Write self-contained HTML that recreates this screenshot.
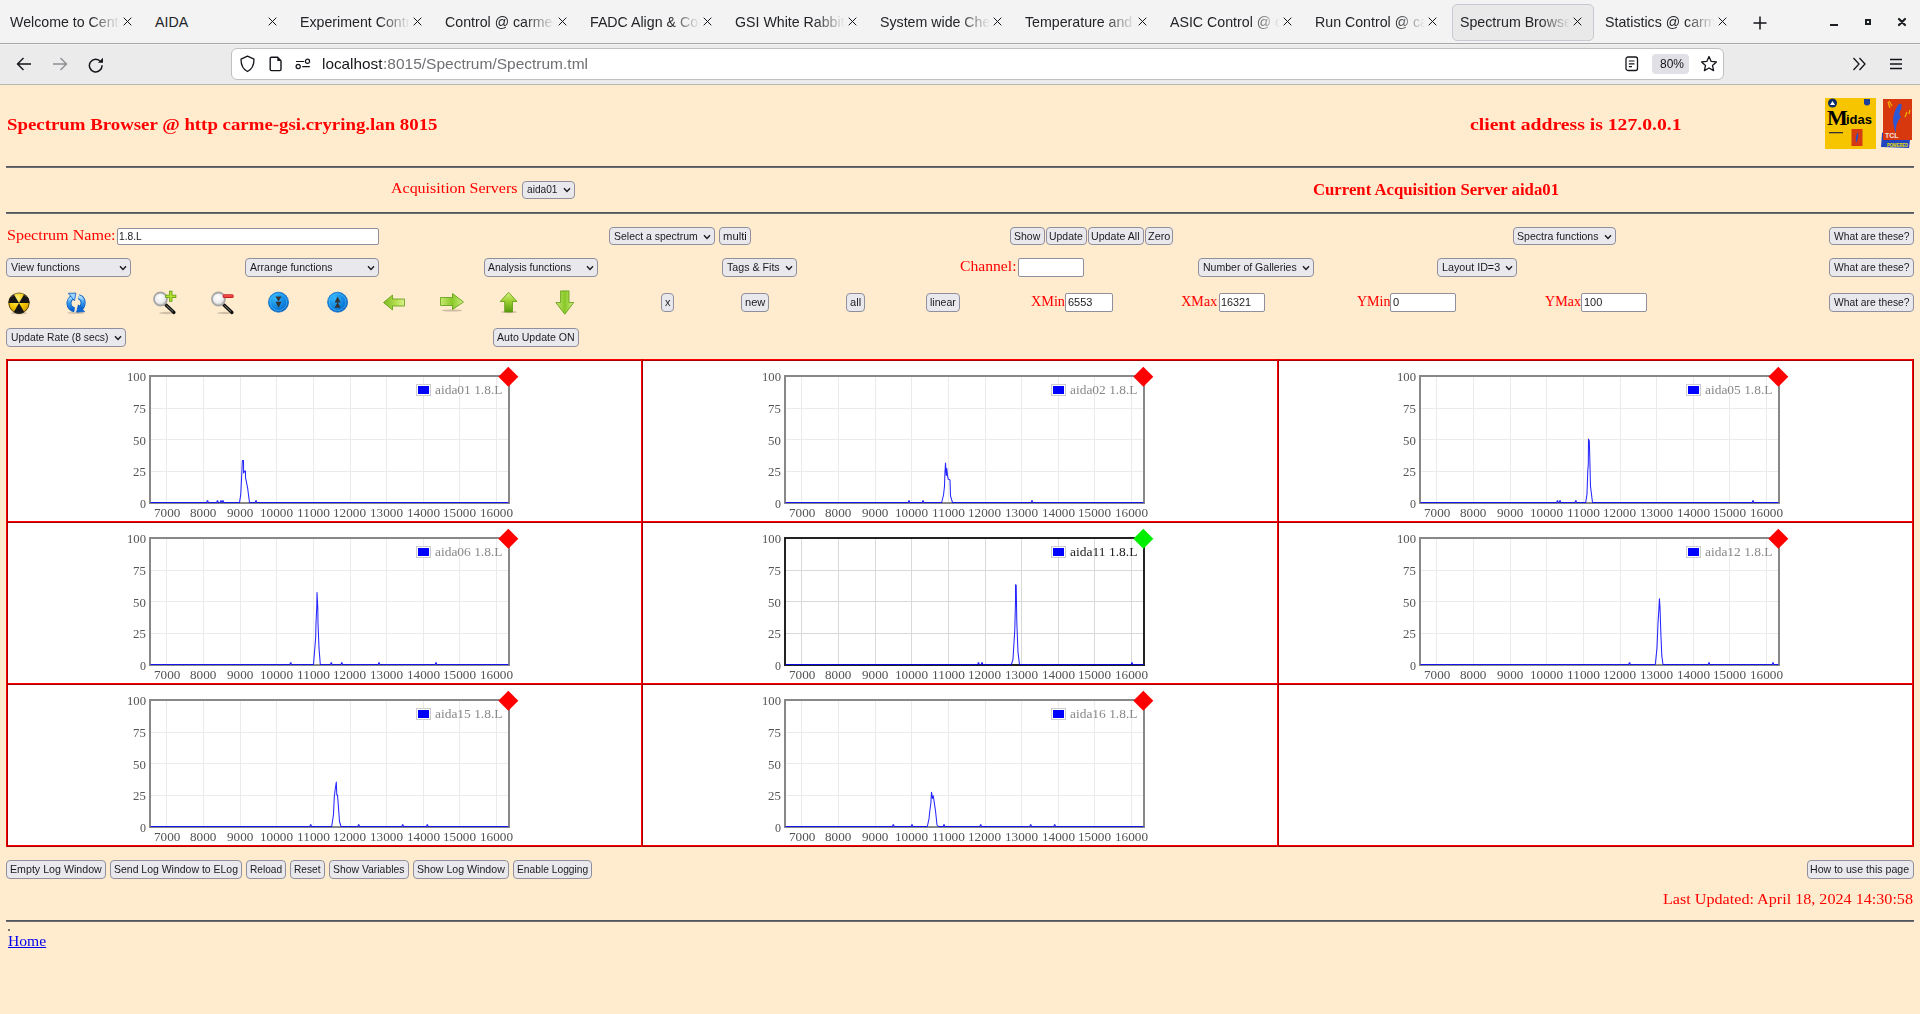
<!DOCTYPE html>
<html><head><meta charset="utf-8"><title>Spectrum Browser</title>
<style>
html,body{margin:0;padding:0;width:1920px;height:1014px;overflow:hidden;background:#ffebcd;position:relative}
.tab{position:absolute;top:12px;height:20px;width:110px;overflow:hidden;white-space:nowrap;font-family:"Liberation Sans",sans-serif;font-size:14.2px;line-height:20px;color:#222428}
.btn{position:absolute;background:#e9e9ed;border:1px solid #8f8f9d;border-radius:4px}
.inp{position:absolute;background:#fff;border:1px solid #8f8f9d;border-radius:2px}
</style></head><body>
<div style="position:absolute;left:0;top:0;width:1920px;height:43px;background:#f3f3f3"></div><div style="position:absolute;left:0;top:43px;width:1920px;height:1px;background:#a9a9a9"></div><div style="position:absolute;left:0;top:44px;width:1920px;height:40px;background:#ebebeb"></div><div style="position:absolute;left:0;top:44px;width:1920px;height:1px;background:#f2f2f2"></div><div style="position:absolute;left:0;top:84px;width:1920px;height:1px;background:#b4b6b2"></div><div style="position:absolute;left:1452px;top:4px;width:140px;height:35px;background:#e9e9e9;border:1px solid #c9c8d0;border-radius:5px"></div><div class="tab" style="left:10px;mask-image:linear-gradient(to right,#000 80px,transparent 110px);-webkit-mask-image:linear-gradient(to right,#000 80px,transparent 110px);">Welcome to Central</div><svg style="position:absolute;left:123px;top:17px" width="9" height="9"><path d="M0.7 0.7L8.3 8.3M8.3 0.7L0.7 8.3" stroke="#15141a" stroke-width="1.0"/></svg><div class="tab" style="left:155px;">AIDA</div><svg style="position:absolute;left:268px;top:17px" width="9" height="9"><path d="M0.7 0.7L8.3 8.3M8.3 0.7L0.7 8.3" stroke="#15141a" stroke-width="1.0"/></svg><div class="tab" style="left:300px;mask-image:linear-gradient(to right,#000 80px,transparent 110px);-webkit-mask-image:linear-gradient(to right,#000 80px,transparent 110px);">Experiment Control</div><svg style="position:absolute;left:413px;top:17px" width="9" height="9"><path d="M0.7 0.7L8.3 8.3M8.3 0.7L0.7 8.3" stroke="#15141a" stroke-width="1.0"/></svg><div class="tab" style="left:445px;mask-image:linear-gradient(to right,#000 80px,transparent 110px);-webkit-mask-image:linear-gradient(to right,#000 80px,transparent 110px);">Control @ carme-gsi</div><svg style="position:absolute;left:558px;top:17px" width="9" height="9"><path d="M0.7 0.7L8.3 8.3M8.3 0.7L0.7 8.3" stroke="#15141a" stroke-width="1.0"/></svg><div class="tab" style="left:590px;mask-image:linear-gradient(to right,#000 80px,transparent 110px);-webkit-mask-image:linear-gradient(to right,#000 80px,transparent 110px);">FADC Align &amp; Control</div><svg style="position:absolute;left:703px;top:17px" width="9" height="9"><path d="M0.7 0.7L8.3 8.3M8.3 0.7L0.7 8.3" stroke="#15141a" stroke-width="1.0"/></svg><div class="tab" style="left:735px;mask-image:linear-gradient(to right,#000 80px,transparent 110px);-webkit-mask-image:linear-gradient(to right,#000 80px,transparent 110px);">GSI White Rabbit</div><svg style="position:absolute;left:848px;top:17px" width="9" height="9"><path d="M0.7 0.7L8.3 8.3M8.3 0.7L0.7 8.3" stroke="#15141a" stroke-width="1.0"/></svg><div class="tab" style="left:880px;mask-image:linear-gradient(to right,#000 80px,transparent 110px);-webkit-mask-image:linear-gradient(to right,#000 80px,transparent 110px);">System wide Checks</div><svg style="position:absolute;left:993px;top:17px" width="9" height="9"><path d="M0.7 0.7L8.3 8.3M8.3 0.7L0.7 8.3" stroke="#15141a" stroke-width="1.0"/></svg><div class="tab" style="left:1025px;mask-image:linear-gradient(to right,#000 80px,transparent 110px);-webkit-mask-image:linear-gradient(to right,#000 80px,transparent 110px);">Temperature and</div><svg style="position:absolute;left:1138px;top:17px" width="9" height="9"><path d="M0.7 0.7L8.3 8.3M8.3 0.7L0.7 8.3" stroke="#15141a" stroke-width="1.0"/></svg><div class="tab" style="left:1170px;mask-image:linear-gradient(to right,#000 80px,transparent 110px);-webkit-mask-image:linear-gradient(to right,#000 80px,transparent 110px);">ASIC Control @ carme</div><svg style="position:absolute;left:1283px;top:17px" width="9" height="9"><path d="M0.7 0.7L8.3 8.3M8.3 0.7L0.7 8.3" stroke="#15141a" stroke-width="1.0"/></svg><div class="tab" style="left:1315px;mask-image:linear-gradient(to right,#000 80px,transparent 110px);-webkit-mask-image:linear-gradient(to right,#000 80px,transparent 110px);">Run Control @ carme</div><svg style="position:absolute;left:1428px;top:17px" width="9" height="9"><path d="M0.7 0.7L8.3 8.3M8.3 0.7L0.7 8.3" stroke="#15141a" stroke-width="1.0"/></svg><div class="tab" style="left:1460px;mask-image:linear-gradient(to right,#000 80px,transparent 110px);-webkit-mask-image:linear-gradient(to right,#000 80px,transparent 110px);">Spectrum Browser</div><svg style="position:absolute;left:1573px;top:17px" width="9" height="9"><path d="M0.7 0.7L8.3 8.3M8.3 0.7L0.7 8.3" stroke="#15141a" stroke-width="1.0"/></svg><div class="tab" style="left:1605px;mask-image:linear-gradient(to right,#000 80px,transparent 110px);-webkit-mask-image:linear-gradient(to right,#000 80px,transparent 110px);">Statistics @ carme</div><svg style="position:absolute;left:1718px;top:17px" width="9" height="9"><path d="M0.7 0.7L8.3 8.3M8.3 0.7L0.7 8.3" stroke="#15141a" stroke-width="1.0"/></svg><svg style="position:absolute;left:1753px;top:16px" width="14" height="14"><path d="M7 0.5V13.5M0.5 7H13.5" stroke="#15141a" stroke-width="1.5"/></svg><div style="position:absolute;left:1830px;top:24px;width:8px;height:2px;background:#1c1f24"></div><div style="position:absolute;left:1865px;top:19px;width:2px;height:2px;border:2px solid #1c1f24"></div><svg style="position:absolute;left:1897px;top:17px" width="10" height="10"><path d="M2 2L8 8M8 2L2 8" stroke="#1c1f24" stroke-width="2.2" stroke-linecap="round"/></svg><svg style="position:absolute;left:16px;top:57px" width="16" height="14"><path d="M1.5 7H15M7.5 1L1.5 7L7.5 13" fill="none" stroke="#15141a" stroke-width="1.4"/></svg><svg style="position:absolute;left:52px;top:57px" width="16" height="14"><path d="M1 7H14.5M8.5 1L14.5 7L8.5 13" fill="none" stroke="#8f8f94" stroke-width="1.4"/></svg><svg style="position:absolute;left:88px;top:57px" width="16" height="16"><path d="M12.6 4.6A6.3 6.3 0 1 0 14 8.2" fill="none" stroke="#15141a" stroke-width="1.5"/><path d="M10 5.8L15 5.8L15 0.8Z" fill="#15141a"/></svg><div style="position:absolute;left:231px;top:48px;width:1491px;height:30px;background:#fff;border:1px solid #c0c0c0;border-radius:6px"></div><svg style="position:absolute;left:239px;top:55px" width="17" height="18"><path d="M8.5 1.2L15 4.2C15 10 12.5 14.5 8.5 16.5C4.5 14.5 2 10 2 4.2Z" fill="none" stroke="#15141a" stroke-width="1.3" stroke-linejoin="round"/></svg><svg style="position:absolute;left:268px;top:56px" width="15" height="16"><path d="M2.2 2.5Q2.2 1.2 3.5 1.2H9.5L13 4.7V13.3Q13 14.6 11.7 14.6H3.5Q2.2 14.6 2.2 13.3Z" fill="none" stroke="#15141a" stroke-width="1.4"/><path d="M9.3 1.2V4.9H13Z" fill="#15141a"/></svg><svg style="position:absolute;left:295px;top:58px" width="16" height="13"><path d="M1 3.5H9.2M7.2 8.7H14.8" stroke="#15141a" stroke-width="1.2"/><circle cx="12.5" cy="3.3" r="2.1" fill="none" stroke="#15141a" stroke-width="1.2"/><circle cx="3.2" cy="8.5" r="2.1" fill="none" stroke="#15141a" stroke-width="1.2"/></svg><span style="position:absolute;left:322.00px;top:56.64px;font-family:'Liberation Sans';font-size:14.6px;line-height:14.6px;font-weight:400;color:#15141a;white-space:pre;transform:scaleX(1.0502);transform-origin:0 0;">localhost</span><span style="position:absolute;left:382.80px;top:56.64px;font-family:'Liberation Sans';font-size:14.6px;line-height:14.6px;font-weight:400;color:#6f6f74;white-space:pre;transform:scaleX(1.0619);transform-origin:0 0;">:8015/Spectrum/Spectrum.tml</span><svg style="position:absolute;left:1625px;top:56px" width="14" height="16"><rect x="1" y="1" width="11.5" height="13.5" rx="2" fill="none" stroke="#15141a" stroke-width="1.3"/><path d="M3.8 5H9.5M3.8 7.8H9.5M3.8 10.6H7" stroke="#15141a" stroke-width="1.2"/></svg><div style="position:absolute;left:1652px;top:54px;width:37px;height:20px;background:#e0e0e6;border-radius:4px"></div><span style="position:absolute;left:1659.50px;top:58.42px;font-family:'Liberation Sans';font-size:12.5px;line-height:12.5px;font-weight:400;color:#15141a;white-space:pre;transform:scaleX(0.9588);transform-origin:0 0;">80%</span><svg style="position:absolute;left:1700px;top:55px" width="18" height="18"><path d="M9 1.5L11.2 6.4L16.4 6.9L12.5 10.4L13.6 15.6L9 13L4.4 15.6L5.5 10.4L1.6 6.9L6.8 6.4Z" fill="none" stroke="#15141a" stroke-width="1.3" stroke-linejoin="round"/></svg><svg style="position:absolute;left:1852px;top:57px" width="15" height="14"><path d="M1.5 1L7 7L1.5 13M7.5 1L13 7L7.5 13" fill="none" stroke="#15141a" stroke-width="1.3"/></svg><svg style="position:absolute;left:1889px;top:57px" width="14" height="14"><path d="M1 2.5H13M1 7H13M1 11.5H13" stroke="#15141a" stroke-width="1.3"/></svg><div style="position:absolute;left:0;top:85px;width:1920px;height:929px;background:#ffebcd"></div><span style="position:absolute;left:7.00px;top:117.18px;font-family:'Liberation Serif';font-size:16.5px;line-height:16.5px;font-weight:700;color:#ff0000;white-space:pre;transform:scaleX(1.1412);transform-origin:0 0;">Spectrum Browser @ http carme-gsi.cryring.lan 8015</span><span style="position:absolute;left:1470.00px;top:117.18px;font-family:'Liberation Serif';font-size:16.5px;line-height:16.5px;font-weight:700;color:#ff0000;white-space:pre;transform:scaleX(1.1912);transform-origin:0 0;">client address is 127.0.0.1</span><div style="position:absolute;left:6px;top:166px;width:1908px;height:1px;background:#52555a"></div><div style="position:absolute;left:6px;top:167px;width:1908px;height:1px;background:#6b6e72"></div><div style="position:absolute;left:6px;top:212px;width:1908px;height:1px;background:#52555a"></div><div style="position:absolute;left:6px;top:213px;width:1908px;height:1px;background:#6b6e72"></div><div style="position:absolute;left:6px;top:920px;width:1908px;height:1px;background:#52555a"></div><div style="position:absolute;left:6px;top:921px;width:1908px;height:1px;background:#6b6e72"></div><span style="position:absolute;left:391.00px;top:181.19px;font-family:'Liberation Serif';font-size:14.1px;line-height:14.1px;font-weight:400;color:#ff0000;white-space:pre;transform:scaleX(1.1339);transform-origin:0 0;">Acquisition Servers</span><span style="position:absolute;left:1313.30px;top:181.58px;font-family:'Liberation Serif';font-size:16.5px;line-height:16.5px;font-weight:700;color:#ff0000;white-space:pre;transform:scaleX(1.0133);transform-origin:0 0;">Current Acquisition Server aida01</span><svg style="position:absolute;left:1825px;top:98px" width="51" height="51" viewBox="0 0 51 51">
<rect width="51" height="51" fill="#f6c500"/>
<circle cx="7.5" cy="5" r="4.5" fill="#0d2a6a"/><path d="M5 7L7.5 3L10 7Z" fill="#fff"/>
<path d="M39 1H45V6Q42 9 39 6Z" fill="#1c3f9c"/>
<text x="2" y="27" font-family="Liberation Serif" font-weight="700" font-size="22" fill="#000">M</text>
<text x="21" y="26" font-family="Liberation Sans" font-weight="700" font-size="13" fill="#000">idas</text>
<rect x="4" y="34" width="14" height="1.3" fill="#333"/>
<rect x="26.5" y="31" width="11" height="17" fill="#d63a12"/><path d="M31 45Q30 38 33 34Q34 40 31 45Z" fill="#2a50c0"/>
</svg><svg style="position:absolute;left:1880px;top:97px" width="33" height="53" viewBox="0 0 33 53">
<path d="M2 36L1 50L29 51L30 43L32 10Z" fill="#1f45c0"/>
<rect x="3" y="2" width="29" height="41" fill="#d8380e"/>
<path d="M16 36Q9 20 19 7Q23 6 21 12Q18 18 21 20Q15 26 16 36Z" fill="#2b58d8"/>
<path d="M8 5L10 11M9 4L12 9M27 15L25 20M30 13L29 17" stroke="#f4b400" stroke-width="1.2"/>
<text x="5" y="41" font-family="Liberation Sans" font-size="7" font-weight="700" fill="#f0e6e6">TCL</text>
<text x="7" y="50" font-family="Liberation Sans" font-size="5" font-weight="700" fill="#f0e000" textLength="21" lengthAdjust="spacingAndGlyphs">POWERED</text>
</svg><div class="btn" style="left:522px;top:181px;width:50.5px;height:15.5px"></div><span style="position:absolute;left:526.60px;top:184.47px;font-family:'Liberation Sans';font-size:11.5px;line-height:11.5px;font-weight:400;color:#1b1b1f;white-space:pre;transform:scaleX(0.8829);transform-origin:0 0;">aida01</span><svg style="position:absolute;left:562.5px;top:187.2px" width="8" height="6"><path d="M1 1.2L4 4.4L7 1.2" fill="none" stroke="#1b1b1f" stroke-width="1.4"/></svg><span style="position:absolute;left:7.00px;top:228.19px;font-family:'Liberation Serif';font-size:14.1px;line-height:14.1px;font-weight:400;color:#ff0000;white-space:pre;transform:scaleX(1.1408);transform-origin:0 0;">Spectrum Name:</span><div class="inp" style="left:117px;top:227.5px;width:259.5px;height:15.5px"></div><span style="position:absolute;left:119.30px;top:231.17px;font-family:'Liberation Sans';font-size:11.5px;line-height:11.5px;font-weight:400;color:#1b1b1f;white-space:pre;transform:scaleX(0.8875);transform-origin:0 0;">1.8.L</span><div class="btn" style="left:609px;top:227.3px;width:104px;height:15.699999999999989px"></div><span style="position:absolute;left:613.60px;top:230.77px;font-family:'Liberation Sans';font-size:11.5px;line-height:11.5px;font-weight:400;color:#1b1b1f;white-space:pre;transform:scaleX(0.9104);transform-origin:0 0;">Select a spectrum</span><svg style="position:absolute;left:703.0px;top:233.6px" width="8" height="6"><path d="M1 1.2L4 4.4L7 1.2" fill="none" stroke="#1b1b1f" stroke-width="1.4"/></svg><div class="btn" style="left:719px;top:227.3px;width:30px;height:15.699999999999989px"></div><span style="position:absolute;left:723.10px;top:230.77px;font-family:'Liberation Sans';font-size:11.5px;line-height:11.5px;font-weight:400;color:#1b1b1f;white-space:pre;transform:scaleX(0.9802);transform-origin:0 0;">multi</span><div class="btn" style="left:1010px;top:227.3px;width:32.5px;height:15.699999999999989px"></div><span style="position:absolute;left:1014.10px;top:230.77px;font-family:'Liberation Sans';font-size:11.5px;line-height:11.5px;font-weight:400;color:#1b1b1f;white-space:pre;transform:scaleX(0.9138);transform-origin:0 0;">Show</span><div class="btn" style="left:1045.5px;top:227.3px;width:39.0px;height:15.699999999999989px"></div><span style="position:absolute;left:1049.15px;top:230.77px;font-family:'Liberation Sans';font-size:11.5px;line-height:11.5px;font-weight:400;color:#1b1b1f;white-space:pre;transform:scaleX(0.9085);transform-origin:0 0;">Update</span><div class="btn" style="left:1087.5px;top:227.3px;width:54.0px;height:15.699999999999989px"></div><span style="position:absolute;left:1091.20px;top:230.77px;font-family:'Liberation Sans';font-size:11.5px;line-height:11.5px;font-weight:400;color:#1b1b1f;white-space:pre;transform:scaleX(0.9268);transform-origin:0 0;">Update All</span><div class="btn" style="left:1144.5px;top:227.3px;width:26.5px;height:15.699999999999989px"></div><span style="position:absolute;left:1147.55px;top:230.77px;font-family:'Liberation Sans';font-size:11.5px;line-height:11.5px;font-weight:400;color:#1b1b1f;white-space:pre;transform:scaleX(0.9469);transform-origin:0 0;">Zero</span><div class="btn" style="left:1512.5px;top:227.3px;width:101.5px;height:15.699999999999989px"></div><span style="position:absolute;left:1517.10px;top:230.77px;font-family:'Liberation Sans';font-size:11.5px;line-height:11.5px;font-weight:400;color:#1b1b1f;white-space:pre;transform:scaleX(0.9172);transform-origin:0 0;">Spectra functions</span><svg style="position:absolute;left:1604.0px;top:233.6px" width="8" height="6"><path d="M1 1.2L4 4.4L7 1.2" fill="none" stroke="#1b1b1f" stroke-width="1.4"/></svg><div class="btn" style="left:1829px;top:227.3px;width:83px;height:15.699999999999989px"></div><span style="position:absolute;left:1833.75px;top:230.77px;font-family:'Liberation Sans';font-size:11.5px;line-height:11.5px;font-weight:400;color:#1b1b1f;white-space:pre;transform:scaleX(0.8946);transform-origin:0 0;">What are these?</span><div class="btn" style="left:6px;top:258.4px;width:123px;height:16.30000000000001px"></div><span style="position:absolute;left:10.60px;top:261.87px;font-family:'Liberation Sans';font-size:11.5px;line-height:11.5px;font-weight:400;color:#1b1b1f;white-space:pre;transform:scaleX(0.9317);transform-origin:0 0;">View functions</span><svg style="position:absolute;left:119.0px;top:264.9px" width="8" height="6"><path d="M1 1.2L4 4.4L7 1.2" fill="none" stroke="#1b1b1f" stroke-width="1.4"/></svg><div class="btn" style="left:245px;top:258.4px;width:131.5px;height:16.30000000000001px"></div><span style="position:absolute;left:249.60px;top:261.87px;font-family:'Liberation Sans';font-size:11.5px;line-height:11.5px;font-weight:400;color:#1b1b1f;white-space:pre;transform:scaleX(0.9163);transform-origin:0 0;">Arrange functions</span><svg style="position:absolute;left:366.5px;top:264.9px" width="8" height="6"><path d="M1 1.2L4 4.4L7 1.2" fill="none" stroke="#1b1b1f" stroke-width="1.4"/></svg><div class="btn" style="left:483.5px;top:258.4px;width:112.5px;height:16.30000000000001px"></div><span style="position:absolute;left:488.10px;top:261.87px;font-family:'Liberation Sans';font-size:11.5px;line-height:11.5px;font-weight:400;color:#1b1b1f;white-space:pre;transform:scaleX(0.9039);transform-origin:0 0;">Analysis functions</span><svg style="position:absolute;left:586.0px;top:264.9px" width="8" height="6"><path d="M1 1.2L4 4.4L7 1.2" fill="none" stroke="#1b1b1f" stroke-width="1.4"/></svg><div class="btn" style="left:722px;top:258.4px;width:73px;height:16.30000000000001px"></div><span style="position:absolute;left:726.60px;top:261.87px;font-family:'Liberation Sans';font-size:11.5px;line-height:11.5px;font-weight:400;color:#1b1b1f;white-space:pre;transform:scaleX(0.9263);transform-origin:0 0;">Tags &amp; Fits</span><svg style="position:absolute;left:785.0px;top:264.9px" width="8" height="6"><path d="M1 1.2L4 4.4L7 1.2" fill="none" stroke="#1b1b1f" stroke-width="1.4"/></svg><span style="position:absolute;left:960.40px;top:258.99px;font-family:'Liberation Serif';font-size:14.1px;line-height:14.1px;font-weight:400;color:#ff0000;white-space:pre;transform:scaleX(1.1102);transform-origin:0 0;">Channel:</span><div class="inp" style="left:1018px;top:258.4px;width:64px;height:16.30000000000001px"></div><div class="btn" style="left:1198px;top:258.4px;width:114px;height:16.30000000000001px"></div><span style="position:absolute;left:1202.60px;top:261.87px;font-family:'Liberation Sans';font-size:11.5px;line-height:11.5px;font-weight:400;color:#1b1b1f;white-space:pre;transform:scaleX(0.9162);transform-origin:0 0;">Number of Galleries</span><svg style="position:absolute;left:1302.0px;top:264.9px" width="8" height="6"><path d="M1 1.2L4 4.4L7 1.2" fill="none" stroke="#1b1b1f" stroke-width="1.4"/></svg><div class="btn" style="left:1437px;top:258.4px;width:78px;height:16.30000000000001px"></div><span style="position:absolute;left:1441.60px;top:261.87px;font-family:'Liberation Sans';font-size:11.5px;line-height:11.5px;font-weight:400;color:#1b1b1f;white-space:pre;transform:scaleX(0.9319);transform-origin:0 0;">Layout ID=3</span><svg style="position:absolute;left:1505.0px;top:264.9px" width="8" height="6"><path d="M1 1.2L4 4.4L7 1.2" fill="none" stroke="#1b1b1f" stroke-width="1.4"/></svg><div class="btn" style="left:1829px;top:258.4px;width:83px;height:16.30000000000001px"></div><span style="position:absolute;left:1833.75px;top:261.87px;font-family:'Liberation Sans';font-size:11.5px;line-height:11.5px;font-weight:400;color:#1b1b1f;white-space:pre;transform:scaleX(0.8946);transform-origin:0 0;">What are these?</span><div class="btn" style="left:661px;top:293px;width:11px;height:17px"></div><span style="position:absolute;left:664.75px;top:297.07px;font-family:'Liberation Sans';font-size:11.5px;line-height:11.5px;font-weight:400;color:#1b1b1f;white-space:pre;transform:scaleX(0.9565);transform-origin:0 0;">x</span><div class="btn" style="left:741px;top:293px;width:26px;height:17px"></div><span style="position:absolute;left:744.85px;top:297.07px;font-family:'Liberation Sans';font-size:11.5px;line-height:11.5px;font-weight:400;color:#1b1b1f;white-space:pre;transform:scaleX(0.9617);transform-origin:0 0;">new</span><div class="btn" style="left:846px;top:293px;width:17px;height:17px"></div><span style="position:absolute;left:849.95px;top:297.07px;font-family:'Liberation Sans';font-size:11.5px;line-height:11.5px;font-weight:400;color:#1b1b1f;white-space:pre;transform:scaleX(0.9639);transform-origin:0 0;">all</span><div class="btn" style="left:926px;top:293px;width:32px;height:17px"></div><span style="position:absolute;left:930.10px;top:297.07px;font-family:'Liberation Sans';font-size:11.5px;line-height:11.5px;font-weight:400;color:#1b1b1f;white-space:pre;transform:scaleX(0.9168);transform-origin:0 0;">linear</span><span style="position:absolute;left:1031.00px;top:294.19px;font-family:'Liberation Serif';font-size:14.1px;line-height:14.1px;font-weight:400;color:#ff0000;white-space:pre;transform:scaleX(1.0093);transform-origin:0 0;">XMin</span><div class="inp" style="left:1065.4px;top:293px;width:45.59999999999991px;height:17px"></div><span style="position:absolute;left:1067.70px;top:297.07px;font-family:'Liberation Sans';font-size:11.5px;line-height:11.5px;font-weight:400;color:#1b1b1f;white-space:pre;transform:scaleX(0.9573);transform-origin:0 0;">6553</span><span style="position:absolute;left:1181.20px;top:294.19px;font-family:'Liberation Serif';font-size:14.1px;line-height:14.1px;font-weight:400;color:#ff0000;white-space:pre;">XMax</span><div class="inp" style="left:1218.5px;top:293px;width:44.700000000000045px;height:17px"></div><span style="position:absolute;left:1220.80px;top:297.07px;font-family:'Liberation Sans';font-size:11.5px;line-height:11.5px;font-weight:400;color:#1b1b1f;white-space:pre;transform:scaleX(0.9411);transform-origin:0 0;">16321</span><span style="position:absolute;left:1356.70px;top:294.19px;font-family:'Liberation Serif';font-size:14.1px;line-height:14.1px;font-weight:400;color:#ff0000;white-space:pre;transform:scaleX(0.9944);transform-origin:0 0;">YMin</span><div class="inp" style="left:1390.3px;top:293px;width:63.700000000000045px;height:17px"></div><span style="position:absolute;left:1392.60px;top:297.07px;font-family:'Liberation Sans';font-size:11.5px;line-height:11.5px;font-weight:400;color:#1b1b1f;white-space:pre;transform:scaleX(0.9678);transform-origin:0 0;">0</span><span style="position:absolute;left:1545.00px;top:294.19px;font-family:'Liberation Serif';font-size:14.1px;line-height:14.1px;font-weight:400;color:#ff0000;white-space:pre;">YMax</span><div class="inp" style="left:1581.2px;top:293px;width:63.799999999999955px;height:17px"></div><span style="position:absolute;left:1583.50px;top:297.07px;font-family:'Liberation Sans';font-size:11.5px;line-height:11.5px;font-weight:400;color:#1b1b1f;white-space:pre;transform:scaleX(0.9537);transform-origin:0 0;">100</span><div class="btn" style="left:1829px;top:293.3px;width:83px;height:16.399999999999977px"></div><span style="position:absolute;left:1833.75px;top:296.77px;font-family:'Liberation Sans';font-size:11.5px;line-height:11.5px;font-weight:400;color:#1b1b1f;white-space:pre;transform:scaleX(0.8946);transform-origin:0 0;">What are these?</span><div class="btn" style="left:6px;top:328.2px;width:118px;height:16.80000000000001px"></div><span style="position:absolute;left:10.60px;top:331.67px;font-family:'Liberation Sans';font-size:11.5px;line-height:11.5px;font-weight:400;color:#1b1b1f;white-space:pre;transform:scaleX(0.8963);transform-origin:0 0;">Update Rate (8 secs)</span><svg style="position:absolute;left:114.0px;top:335.0px" width="8" height="6"><path d="M1 1.2L4 4.4L7 1.2" fill="none" stroke="#1b1b1f" stroke-width="1.4"/></svg><div class="btn" style="left:493px;top:328.2px;width:84px;height:16.80000000000001px"></div><span style="position:absolute;left:497.15px;top:331.67px;font-family:'Liberation Sans';font-size:11.5px;line-height:11.5px;font-weight:400;color:#1b1b1f;white-space:pre;transform:scaleX(0.9207);transform-origin:0 0;">Auto Update ON</span><div class="btn" style="left:6px;top:860.3px;width:98px;height:16.5px"></div><span style="position:absolute;left:10.10px;top:863.77px;font-family:'Liberation Sans';font-size:11.5px;line-height:11.5px;font-weight:400;color:#1b1b1f;white-space:pre;transform:scaleX(0.9265);transform-origin:0 0;">Empty Log Window</span><div class="btn" style="left:110.3px;top:860.3px;width:129.7px;height:16.5px"></div><span style="position:absolute;left:114.15px;top:863.77px;font-family:'Liberation Sans';font-size:11.5px;line-height:11.5px;font-weight:400;color:#1b1b1f;white-space:pre;transform:scaleX(0.9105);transform-origin:0 0;">Send Log Window to ELog</span><div class="btn" style="left:246px;top:860.3px;width:38px;height:16.5px"></div><span style="position:absolute;left:249.95px;top:863.77px;font-family:'Liberation Sans';font-size:11.5px;line-height:11.5px;font-weight:400;color:#1b1b1f;white-space:pre;transform:scaleX(0.8806);transform-origin:0 0;">Reload</span><div class="btn" style="left:290px;top:860.3px;width:32.5px;height:16.5px"></div><span style="position:absolute;left:294.00px;top:863.77px;font-family:'Liberation Sans';font-size:11.5px;line-height:11.5px;font-weight:400;color:#1b1b1f;white-space:pre;transform:scaleX(0.8820);transform-origin:0 0;">Reset</span><div class="btn" style="left:329px;top:860.3px;width:78px;height:16.5px"></div><span style="position:absolute;left:333.25px;top:863.77px;font-family:'Liberation Sans';font-size:11.5px;line-height:11.5px;font-weight:400;color:#1b1b1f;white-space:pre;transform:scaleX(0.9043);transform-origin:0 0;">Show Variables</span><div class="btn" style="left:413px;top:860.3px;width:94px;height:16.5px"></div><span style="position:absolute;left:417.10px;top:863.77px;font-family:'Liberation Sans';font-size:11.5px;line-height:11.5px;font-weight:400;color:#1b1b1f;white-space:pre;transform:scaleX(0.9218);transform-origin:0 0;">Show Log Window</span><div class="btn" style="left:513px;top:860.3px;width:76.5px;height:16.5px"></div><span style="position:absolute;left:516.65px;top:863.77px;font-family:'Liberation Sans';font-size:11.5px;line-height:11.5px;font-weight:400;color:#1b1b1f;white-space:pre;transform:scaleX(0.8907);transform-origin:0 0;">Enable Logging</span><div class="btn" style="left:1806.5px;top:860.3px;width:105.0px;height:16.5px"></div><span style="position:absolute;left:1810.45px;top:863.77px;font-family:'Liberation Sans';font-size:11.5px;line-height:11.5px;font-weight:400;color:#1b1b1f;white-space:pre;transform:scaleX(0.9227);transform-origin:0 0;">How to use this page</span><span style="position:absolute;left:1663.20px;top:892.19px;font-family:'Liberation Serif';font-size:14.1px;line-height:14.1px;font-weight:400;color:#ff0000;white-space:pre;transform:scaleX(1.1445);transform-origin:0 0;">Last Updated: April 18, 2024 14:30:58</span><div style="position:absolute;left:8px;top:929px;width:2px;height:2px;background:#555;opacity:0.8"></div><span style="position:absolute;left:8.20px;top:933.79px;font-family:'Liberation Serif';font-size:14.1px;line-height:14.1px;font-weight:400;color:#0000ee;white-space:pre;transform:scaleX(1.1088);transform-origin:0 0;text-decoration:underline;">Home</span><svg style="position:absolute;left:0;top:280px" width="600" height="40" viewBox="0 280 600 40">
<defs>
<radialGradient id="gy" cx="0.4" cy="0.3" r="0.8"><stop offset="0" stop-color="#fff38a"/><stop offset="0.5" stop-color="#f4c800"/><stop offset="1" stop-color="#c89000"/></radialGradient>
<linearGradient id="gb" x1="0" y1="0" x2="1" y2="1"><stop offset="0" stop-color="#7fd0ff"/><stop offset="0.5" stop-color="#1a8fe0"/><stop offset="1" stop-color="#0a5cc0"/></linearGradient>
<radialGradient id="gbc" cx="0.35" cy="0.3" r="0.8"><stop offset="0" stop-color="#33b8ff"/><stop offset="0.7" stop-color="#0a7ad8"/><stop offset="1" stop-color="#0858b0"/></radialGradient>
<linearGradient id="gg" x1="0" y1="0" x2="0" y2="1"><stop offset="0" stop-color="#d8f080"/><stop offset="0.45" stop-color="#9cd030"/><stop offset="1" stop-color="#5a9a10"/></linearGradient>
<linearGradient id="ggh" x1="0" y1="0" x2="1" y2="0"><stop offset="0" stop-color="#7ab820"/><stop offset="0.6" stop-color="#b8e050"/><stop offset="1" stop-color="#d8f090"/></linearGradient>
<linearGradient id="ggh2" x1="0" y1="0" x2="1" y2="0"><stop offset="0" stop-color="#c8e870"/><stop offset="0.5" stop-color="#88c828"/><stop offset="1" stop-color="#d0f080"/></linearGradient>
<radialGradient id="glens" cx="0.45" cy="0.4" r="0.6"><stop offset="0" stop-color="#ffffff"/><stop offset="0.6" stop-color="#eeeeee"/><stop offset="1" stop-color="#c8c8c8"/></radialGradient>
</defs>
<!-- radiation -->
<ellipse cx="19" cy="313.2" rx="8" ry="1.3" fill="#000" opacity="0.18"/>
<circle cx="19" cy="303.1" r="10.6" fill="url(#gy)"/>
<g fill="#151515">
<path d="M19 303.1 L29.6 303.1 A10.6 10.6 0 0 0 24.3 293.92 Z"/>
<path d="M19 303.1 L13.7 293.92 A10.6 10.6 0 0 0 8.4 303.1 Z"/>
<path d="M19 303.1 L13.7 312.28 A10.6 10.6 0 0 0 24.3 312.28 Z"/>
</g>
<circle cx="19" cy="303.1" r="10.1" fill="none" stroke="#222" stroke-width="1" opacity="0.7"/>
<path d="M11.5 297 A9 9 0 0 1 26.5 297" fill="none" stroke="#fff" stroke-width="0.8" opacity="0.35"/>
<!-- refresh -->
<ellipse cx="76" cy="312.8" rx="9" ry="1.3" fill="#000" opacity="0.15"/>
<linearGradient id="gr2" x1="0" y1="0" x2="0" y2="1"><stop offset="0" stop-color="#b8e4ff"/><stop offset="0.45" stop-color="#3a9ef0"/><stop offset="1" stop-color="#0a62d0"/></linearGradient>
<path d="M73.6 297 A6.6 6.6 0 0 0 74.4 309.8" fill="none" stroke="#0a5cc0" stroke-width="5"/>
<path d="M73.6 297 A6.6 6.6 0 0 0 74.4 309.8" fill="none" stroke="url(#gr2)" stroke-width="3.4"/>
<path d="M68.3 293.3L75.9 293.1L74.5 300.8Z" fill="#9ad4ff" stroke="#0a5cc0" stroke-width="0.8" stroke-linejoin="round"/>
<path d="M78.6 296.6 A6.6 6.6 0 0 1 79 309" fill="none" stroke="#0a5cc0" stroke-width="5"/>
<path d="M78.6 296.6 A6.6 6.6 0 0 1 79 309" fill="none" stroke="url(#gr2)" stroke-width="3.4"/>
<path d="M76.6 312.2L84.6 311.6L78.4 304.8Z" fill="#0c6ad8" stroke="#0a5cc0" stroke-width="0.8" stroke-linejoin="round"/>
<!-- zoom in -->
<ellipse cx="167" cy="313" rx="8" ry="1.2" fill="#000" opacity="0.18"/>
<path d="M166 305L174 312.5" stroke="#111" stroke-width="3.2" stroke-linecap="round"/>
<path d="M166.5 305.5L173 311.5" stroke="#888" stroke-width="1"/>
<circle cx="160.5" cy="299" r="6.5" fill="url(#glens)" stroke="#a8a8a8" stroke-width="1.8"/>
<path d="M170.7 290.8V301.8M165.3 296.4H176.3" stroke="#5a9a10" stroke-width="3.4"/>
<path d="M170.7 291.6V301M166.1 296.4H175.5" stroke="#b8e030" stroke-width="1.8"/>
<!-- zoom out -->
<ellipse cx="225" cy="313" rx="8" ry="1.2" fill="#000" opacity="0.18"/>
<path d="M224 305L232 312.5" stroke="#111" stroke-width="3.2" stroke-linecap="round"/>
<path d="M224.5 305.5L231 311.5" stroke="#888" stroke-width="1"/>
<circle cx="218.5" cy="299" r="6.5" fill="url(#glens)" stroke="#a8a8a8" stroke-width="1.8"/>
<rect x="222.7" y="294.3" width="11" height="3.6" rx="1.5" fill="#c02020"/><rect x="223.4" y="295" width="9.6" height="2" rx="1" fill="#f04848"/>
<!-- blue down -->
<circle cx="278.5" cy="302.2" r="10" fill="url(#gbc)" stroke="#0868c8" stroke-width="0.8"/>
<circle cx="278.5" cy="302.2" r="8.3" fill="none" stroke="#5cc8ff" stroke-width="0.7" opacity="0.8"/>
<path d="M275.5 296.5H281.5L278.5 301.5Z M275.5 301.8H281.5L278.5 307.8Z" fill="#333"/>
<!-- blue up -->
<circle cx="337.6" cy="302.2" r="10" fill="url(#gbc)" stroke="#0868c8" stroke-width="0.8"/>
<circle cx="337.6" cy="302.2" r="8.3" fill="none" stroke="#5cc8ff" stroke-width="0.7" opacity="0.8"/>
<path d="M334.6 302.5H340.6L337.6 296.5Z M334.6 307.8H340.6L337.6 302.2Z" fill="#333"/>
<!-- left arrow -->
<path d="M383.5 302.5L392.5 295V299H404.5V306H392.5V310Z" fill="url(#ggh)" stroke="#5a9a10" stroke-width="0.8" stroke-linejoin="round"/>
<!-- right arrow -->
<ellipse cx="452" cy="310.5" rx="10" ry="1" fill="#000" opacity="0.2"/>
<path d="M463.5 302L452.5 293.5V297.5H440.5V305.5H452.5V309.5Z" fill="url(#ggh2)" stroke="#5a9a10" stroke-width="0.8" stroke-linejoin="round"/>
<!-- up arrow -->
<ellipse cx="509" cy="312" rx="8" ry="1.2" fill="#000" opacity="0.2"/>
<path d="M508.6 292.3L517 301.5H512.5V312H504.7V301.5H500.2Z" fill="url(#gg)" stroke="#5a9a10" stroke-width="0.8" stroke-linejoin="round"/>
<!-- down arrow -->
<path d="M564.8 314.2L573.8 302.5H569V290.9H560.6V302.5H555.8Z" fill="url(#ggh2)" stroke="#5a9a10" stroke-width="0.8" stroke-linejoin="round"/>
</svg>
<div style="position:absolute;left:8px;top:361px;width:1904px;height:484px;background:#fff"></div><div style="position:absolute;left:6px;top:359px;width:1908px;height:1px;background:#ff0000"></div><div style="position:absolute;left:6px;top:360px;width:1908px;height:1px;background:#a80000"></div><div style="position:absolute;left:6px;top:521px;width:1908px;height:1px;background:#ff0000"></div><div style="position:absolute;left:6px;top:522px;width:1908px;height:1px;background:#a80000"></div><div style="position:absolute;left:6px;top:683px;width:1908px;height:1px;background:#ff0000"></div><div style="position:absolute;left:6px;top:684px;width:1908px;height:1px;background:#a80000"></div><div style="position:absolute;left:6px;top:845px;width:1908px;height:1px;background:#ff0000"></div><div style="position:absolute;left:6px;top:846px;width:1908px;height:1px;background:#a80000"></div><div style="position:absolute;left:6px;top:359px;width:1px;height:488px;background:#ff0000"></div><div style="position:absolute;left:7px;top:359px;width:1px;height:488px;background:#a80000"></div><div style="position:absolute;left:641px;top:359px;width:1px;height:488px;background:#ff0000"></div><div style="position:absolute;left:642px;top:359px;width:1px;height:488px;background:#a80000"></div><div style="position:absolute;left:1277px;top:359px;width:1px;height:488px;background:#ff0000"></div><div style="position:absolute;left:1278px;top:359px;width:1px;height:488px;background:#a80000"></div><div style="position:absolute;left:1912px;top:359px;width:1px;height:488px;background:#ff0000"></div><div style="position:absolute;left:1913px;top:359px;width:1px;height:488px;background:#a80000"></div><svg style="position:absolute;left:149px;top:375px;overflow:visible" width="361" height="129"><line x1="17.5" y1="2" x2="17.5" y2="127" stroke="#ebebeb" stroke-width="1"/><line x1="54.5" y1="2" x2="54.5" y2="127" stroke="#ebebeb" stroke-width="1"/><line x1="91.5" y1="2" x2="91.5" y2="127" stroke="#ebebeb" stroke-width="1"/><line x1="127.5" y1="2" x2="127.5" y2="127" stroke="#ebebeb" stroke-width="1"/><line x1="164.5" y1="2" x2="164.5" y2="127" stroke="#ebebeb" stroke-width="1"/><line x1="201.5" y1="2" x2="201.5" y2="127" stroke="#ebebeb" stroke-width="1"/><line x1="237.5" y1="2" x2="237.5" y2="127" stroke="#ebebeb" stroke-width="1"/><line x1="274.5" y1="2" x2="274.5" y2="127" stroke="#ebebeb" stroke-width="1"/><line x1="310.5" y1="2" x2="310.5" y2="127" stroke="#ebebeb" stroke-width="1"/><line x1="347.5" y1="2" x2="347.5" y2="127" stroke="#ebebeb" stroke-width="1"/><line x1="2" y1="33.5" x2="359" y2="33.5" stroke="#ebebeb" stroke-width="1"/><line x1="2" y1="64.5" x2="359" y2="64.5" stroke="#ebebeb" stroke-width="1"/><line x1="2" y1="96.5" x2="359" y2="96.5" stroke="#ebebeb" stroke-width="1"/><rect x="1" y="1" width="359" height="127" fill="none" stroke="#888" stroke-width="2"/><polyline transform="translate(0,0.5)" points="1.50,127.00 57.80,127.00 58.20,125.20 58.80,125.20 59.20,127.00 67.80,127.00 68.20,125.20 68.80,125.20 69.20,127.00 71.30,127.00 71.70,125.20 72.30,125.20 72.70,127.00 73.30,127.00 73.70,125.20 74.30,125.20 74.70,127.00 90.50,127.00 91.80,118.60 93.40,85.00 94.50,85.00 94.60,97.40 95.80,95.60 96.50,95.60 96.50,101.80 98.60,112.40 100.50,127.00 106.30,127.00 106.70,125.20 107.30,125.20 107.70,127.00 359.50,127.00" fill="none" stroke="#0000ff" stroke-opacity="0.85" stroke-width="1.05" stroke-linejoin="round"/><rect x="267.5" y="9.5" width="14" height="11" fill="#fff" stroke="#ccc" stroke-width="1"/><rect x="269" y="11" width="11" height="8" fill="#0000ff"/><path d="M359.3 -8.2L369.3 1.8L359.3 11.8L349.3 1.8Z" fill="#ff0000"/></svg><span style="position:absolute;left:434.50px;top:383.95px;font-family:'Liberation Serif';font-size:12px;line-height:12px;font-weight:400;color:#888;white-space:pre;transform:scaleX(1.1189);transform-origin:0 0;">aida01 1.8.L</span><span style="position:absolute;left:127.20px;top:372.09px;font-family:'Liberation Serif';font-size:11.6px;line-height:11.6px;font-weight:400;color:#545454;white-space:pre;transform:scaleX(1.0925);transform-origin:0 0;">100</span><span style="position:absolute;left:133.40px;top:403.84px;font-family:'Liberation Serif';font-size:11.6px;line-height:11.6px;font-weight:400;color:#545454;white-space:pre;transform:scaleX(1.1040);transform-origin:0 0;">75</span><span style="position:absolute;left:133.40px;top:435.59px;font-family:'Liberation Serif';font-size:11.6px;line-height:11.6px;font-weight:400;color:#545454;white-space:pre;transform:scaleX(1.1040);transform-origin:0 0;">50</span><span style="position:absolute;left:133.40px;top:467.34px;font-family:'Liberation Serif';font-size:11.6px;line-height:11.6px;font-weight:400;color:#545454;white-space:pre;transform:scaleX(1.1040);transform-origin:0 0;">25</span><span style="position:absolute;left:140.20px;top:499.09px;font-family:'Liberation Serif';font-size:11.6px;line-height:11.6px;font-weight:400;color:#545454;white-space:pre;transform:scaleX(1.0350);transform-origin:0 0;">0</span><span style="position:absolute;left:153.72px;top:507.58px;font-family:'Liberation Serif';font-size:11.6px;line-height:11.6px;font-weight:400;color:#545454;white-space:pre;transform:scaleX(1.1342);transform-origin:0 0;">7000</span><span style="position:absolute;left:190.33px;top:507.58px;font-family:'Liberation Serif';font-size:11.6px;line-height:11.6px;font-weight:400;color:#545454;white-space:pre;transform:scaleX(1.1342);transform-origin:0 0;">8000</span><span style="position:absolute;left:226.94px;top:507.58px;font-family:'Liberation Serif';font-size:11.6px;line-height:11.6px;font-weight:400;color:#545454;white-space:pre;transform:scaleX(1.1342);transform-origin:0 0;">9000</span><span style="position:absolute;left:260.20px;top:507.58px;font-family:'Liberation Serif';font-size:11.6px;line-height:11.6px;font-weight:400;color:#545454;white-space:pre;transform:scaleX(1.1385);transform-origin:0 0;">10000</span><span style="position:absolute;left:296.81px;top:507.58px;font-family:'Liberation Serif';font-size:11.6px;line-height:11.6px;font-weight:400;color:#545454;white-space:pre;transform:scaleX(1.1554);transform-origin:0 0;">11000</span><span style="position:absolute;left:333.43px;top:507.58px;font-family:'Liberation Serif';font-size:11.6px;line-height:11.6px;font-weight:400;color:#545454;white-space:pre;transform:scaleX(1.1385);transform-origin:0 0;">12000</span><span style="position:absolute;left:370.04px;top:507.58px;font-family:'Liberation Serif';font-size:11.6px;line-height:11.6px;font-weight:400;color:#545454;white-space:pre;transform:scaleX(1.1385);transform-origin:0 0;">13000</span><span style="position:absolute;left:406.65px;top:507.58px;font-family:'Liberation Serif';font-size:11.6px;line-height:11.6px;font-weight:400;color:#545454;white-space:pre;transform:scaleX(1.1385);transform-origin:0 0;">14000</span><span style="position:absolute;left:443.26px;top:507.58px;font-family:'Liberation Serif';font-size:11.6px;line-height:11.6px;font-weight:400;color:#545454;white-space:pre;transform:scaleX(1.1385);transform-origin:0 0;">15000</span><span style="position:absolute;left:479.87px;top:507.58px;font-family:'Liberation Serif';font-size:11.6px;line-height:11.6px;font-weight:400;color:#545454;white-space:pre;transform:scaleX(1.1385);transform-origin:0 0;">16000</span><svg style="position:absolute;left:784px;top:375px;overflow:visible" width="361" height="129"><line x1="17.5" y1="2" x2="17.5" y2="127" stroke="#ebebeb" stroke-width="1"/><line x1="54.5" y1="2" x2="54.5" y2="127" stroke="#ebebeb" stroke-width="1"/><line x1="91.5" y1="2" x2="91.5" y2="127" stroke="#ebebeb" stroke-width="1"/><line x1="127.5" y1="2" x2="127.5" y2="127" stroke="#ebebeb" stroke-width="1"/><line x1="164.5" y1="2" x2="164.5" y2="127" stroke="#ebebeb" stroke-width="1"/><line x1="201.5" y1="2" x2="201.5" y2="127" stroke="#ebebeb" stroke-width="1"/><line x1="237.5" y1="2" x2="237.5" y2="127" stroke="#ebebeb" stroke-width="1"/><line x1="274.5" y1="2" x2="274.5" y2="127" stroke="#ebebeb" stroke-width="1"/><line x1="310.5" y1="2" x2="310.5" y2="127" stroke="#ebebeb" stroke-width="1"/><line x1="347.5" y1="2" x2="347.5" y2="127" stroke="#ebebeb" stroke-width="1"/><line x1="2" y1="33.5" x2="359" y2="33.5" stroke="#ebebeb" stroke-width="1"/><line x1="2" y1="64.5" x2="359" y2="64.5" stroke="#ebebeb" stroke-width="1"/><line x1="2" y1="96.5" x2="359" y2="96.5" stroke="#ebebeb" stroke-width="1"/><rect x="1" y="1" width="359" height="127" fill="none" stroke="#888" stroke-width="2"/><polyline transform="translate(0,0.5)" points="1.50,127.00 124.30,127.00 124.70,125.20 125.30,125.20 125.70,127.00 138.30,127.00 138.70,125.20 139.30,125.20 139.70,127.00 157.70,127.00 159.50,119.50 160.50,110.70 160.80,100.00 161.50,87.60 162.30,100.00 162.80,93.00 163.50,100.00 164.20,103.60 166.00,104.40 166.50,120.40 168.50,127.00 247.30,127.00 247.70,125.20 248.30,125.20 248.70,127.00 359.50,127.00" fill="none" stroke="#0000ff" stroke-opacity="0.85" stroke-width="1.05" stroke-linejoin="round"/><rect x="267.5" y="9.5" width="14" height="11" fill="#fff" stroke="#ccc" stroke-width="1"/><rect x="269" y="11" width="11" height="8" fill="#0000ff"/><path d="M359.3 -8.2L369.3 1.8L359.3 11.8L349.3 1.8Z" fill="#ff0000"/></svg><span style="position:absolute;left:1069.50px;top:383.95px;font-family:'Liberation Serif';font-size:12px;line-height:12px;font-weight:400;color:#888;white-space:pre;transform:scaleX(1.1189);transform-origin:0 0;">aida02 1.8.L</span><span style="position:absolute;left:762.20px;top:372.09px;font-family:'Liberation Serif';font-size:11.6px;line-height:11.6px;font-weight:400;color:#545454;white-space:pre;transform:scaleX(1.0925);transform-origin:0 0;">100</span><span style="position:absolute;left:768.40px;top:403.84px;font-family:'Liberation Serif';font-size:11.6px;line-height:11.6px;font-weight:400;color:#545454;white-space:pre;transform:scaleX(1.1040);transform-origin:0 0;">75</span><span style="position:absolute;left:768.40px;top:435.59px;font-family:'Liberation Serif';font-size:11.6px;line-height:11.6px;font-weight:400;color:#545454;white-space:pre;transform:scaleX(1.1040);transform-origin:0 0;">50</span><span style="position:absolute;left:768.40px;top:467.34px;font-family:'Liberation Serif';font-size:11.6px;line-height:11.6px;font-weight:400;color:#545454;white-space:pre;transform:scaleX(1.1040);transform-origin:0 0;">25</span><span style="position:absolute;left:775.20px;top:499.09px;font-family:'Liberation Serif';font-size:11.6px;line-height:11.6px;font-weight:400;color:#545454;white-space:pre;transform:scaleX(1.0350);transform-origin:0 0;">0</span><span style="position:absolute;left:788.72px;top:507.58px;font-family:'Liberation Serif';font-size:11.6px;line-height:11.6px;font-weight:400;color:#545454;white-space:pre;transform:scaleX(1.1342);transform-origin:0 0;">7000</span><span style="position:absolute;left:825.33px;top:507.58px;font-family:'Liberation Serif';font-size:11.6px;line-height:11.6px;font-weight:400;color:#545454;white-space:pre;transform:scaleX(1.1342);transform-origin:0 0;">8000</span><span style="position:absolute;left:861.94px;top:507.58px;font-family:'Liberation Serif';font-size:11.6px;line-height:11.6px;font-weight:400;color:#545454;white-space:pre;transform:scaleX(1.1342);transform-origin:0 0;">9000</span><span style="position:absolute;left:895.20px;top:507.58px;font-family:'Liberation Serif';font-size:11.6px;line-height:11.6px;font-weight:400;color:#545454;white-space:pre;transform:scaleX(1.1385);transform-origin:0 0;">10000</span><span style="position:absolute;left:931.81px;top:507.58px;font-family:'Liberation Serif';font-size:11.6px;line-height:11.6px;font-weight:400;color:#545454;white-space:pre;transform:scaleX(1.1554);transform-origin:0 0;">11000</span><span style="position:absolute;left:968.43px;top:507.58px;font-family:'Liberation Serif';font-size:11.6px;line-height:11.6px;font-weight:400;color:#545454;white-space:pre;transform:scaleX(1.1385);transform-origin:0 0;">12000</span><span style="position:absolute;left:1005.04px;top:507.58px;font-family:'Liberation Serif';font-size:11.6px;line-height:11.6px;font-weight:400;color:#545454;white-space:pre;transform:scaleX(1.1385);transform-origin:0 0;">13000</span><span style="position:absolute;left:1041.65px;top:507.58px;font-family:'Liberation Serif';font-size:11.6px;line-height:11.6px;font-weight:400;color:#545454;white-space:pre;transform:scaleX(1.1385);transform-origin:0 0;">14000</span><span style="position:absolute;left:1078.26px;top:507.58px;font-family:'Liberation Serif';font-size:11.6px;line-height:11.6px;font-weight:400;color:#545454;white-space:pre;transform:scaleX(1.1385);transform-origin:0 0;">15000</span><span style="position:absolute;left:1114.87px;top:507.58px;font-family:'Liberation Serif';font-size:11.6px;line-height:11.6px;font-weight:400;color:#545454;white-space:pre;transform:scaleX(1.1385);transform-origin:0 0;">16000</span><svg style="position:absolute;left:1419px;top:375px;overflow:visible" width="361" height="129"><line x1="17.5" y1="2" x2="17.5" y2="127" stroke="#ebebeb" stroke-width="1"/><line x1="54.5" y1="2" x2="54.5" y2="127" stroke="#ebebeb" stroke-width="1"/><line x1="91.5" y1="2" x2="91.5" y2="127" stroke="#ebebeb" stroke-width="1"/><line x1="127.5" y1="2" x2="127.5" y2="127" stroke="#ebebeb" stroke-width="1"/><line x1="164.5" y1="2" x2="164.5" y2="127" stroke="#ebebeb" stroke-width="1"/><line x1="201.5" y1="2" x2="201.5" y2="127" stroke="#ebebeb" stroke-width="1"/><line x1="237.5" y1="2" x2="237.5" y2="127" stroke="#ebebeb" stroke-width="1"/><line x1="274.5" y1="2" x2="274.5" y2="127" stroke="#ebebeb" stroke-width="1"/><line x1="310.5" y1="2" x2="310.5" y2="127" stroke="#ebebeb" stroke-width="1"/><line x1="347.5" y1="2" x2="347.5" y2="127" stroke="#ebebeb" stroke-width="1"/><line x1="2" y1="33.5" x2="359" y2="33.5" stroke="#ebebeb" stroke-width="1"/><line x1="2" y1="64.5" x2="359" y2="64.5" stroke="#ebebeb" stroke-width="1"/><line x1="2" y1="96.5" x2="359" y2="96.5" stroke="#ebebeb" stroke-width="1"/><rect x="1" y="1" width="359" height="127" fill="none" stroke="#888" stroke-width="2"/><polyline transform="translate(0,0.5)" points="1.50,127.00 137.80,127.00 138.20,125.20 138.80,125.20 139.20,127.00 140.30,127.00 140.70,125.20 141.30,125.20 141.70,127.00 156.10,127.00 156.50,125.20 157.10,125.20 157.50,127.00 166.70,127.00 168.00,118.60 168.80,94.70 169.30,89.40 169.50,63.60 170.30,65.40 170.80,83.00 171.50,110.70 173.50,127.00 333.30,127.00 333.70,125.20 334.30,125.20 334.70,127.00 359.50,127.00" fill="none" stroke="#0000ff" stroke-opacity="0.85" stroke-width="1.05" stroke-linejoin="round"/><rect x="267.5" y="9.5" width="14" height="11" fill="#fff" stroke="#ccc" stroke-width="1"/><rect x="269" y="11" width="11" height="8" fill="#0000ff"/><path d="M359.3 -8.2L369.3 1.8L359.3 11.8L349.3 1.8Z" fill="#ff0000"/></svg><span style="position:absolute;left:1704.50px;top:383.95px;font-family:'Liberation Serif';font-size:12px;line-height:12px;font-weight:400;color:#888;white-space:pre;transform:scaleX(1.1189);transform-origin:0 0;">aida05 1.8.L</span><span style="position:absolute;left:1397.20px;top:372.09px;font-family:'Liberation Serif';font-size:11.6px;line-height:11.6px;font-weight:400;color:#545454;white-space:pre;transform:scaleX(1.0925);transform-origin:0 0;">100</span><span style="position:absolute;left:1403.40px;top:403.84px;font-family:'Liberation Serif';font-size:11.6px;line-height:11.6px;font-weight:400;color:#545454;white-space:pre;transform:scaleX(1.1040);transform-origin:0 0;">75</span><span style="position:absolute;left:1403.40px;top:435.59px;font-family:'Liberation Serif';font-size:11.6px;line-height:11.6px;font-weight:400;color:#545454;white-space:pre;transform:scaleX(1.1040);transform-origin:0 0;">50</span><span style="position:absolute;left:1403.40px;top:467.34px;font-family:'Liberation Serif';font-size:11.6px;line-height:11.6px;font-weight:400;color:#545454;white-space:pre;transform:scaleX(1.1040);transform-origin:0 0;">25</span><span style="position:absolute;left:1410.20px;top:499.09px;font-family:'Liberation Serif';font-size:11.6px;line-height:11.6px;font-weight:400;color:#545454;white-space:pre;transform:scaleX(1.0350);transform-origin:0 0;">0</span><span style="position:absolute;left:1423.72px;top:507.58px;font-family:'Liberation Serif';font-size:11.6px;line-height:11.6px;font-weight:400;color:#545454;white-space:pre;transform:scaleX(1.1342);transform-origin:0 0;">7000</span><span style="position:absolute;left:1460.33px;top:507.58px;font-family:'Liberation Serif';font-size:11.6px;line-height:11.6px;font-weight:400;color:#545454;white-space:pre;transform:scaleX(1.1342);transform-origin:0 0;">8000</span><span style="position:absolute;left:1496.94px;top:507.58px;font-family:'Liberation Serif';font-size:11.6px;line-height:11.6px;font-weight:400;color:#545454;white-space:pre;transform:scaleX(1.1342);transform-origin:0 0;">9000</span><span style="position:absolute;left:1530.20px;top:507.58px;font-family:'Liberation Serif';font-size:11.6px;line-height:11.6px;font-weight:400;color:#545454;white-space:pre;transform:scaleX(1.1385);transform-origin:0 0;">10000</span><span style="position:absolute;left:1566.81px;top:507.58px;font-family:'Liberation Serif';font-size:11.6px;line-height:11.6px;font-weight:400;color:#545454;white-space:pre;transform:scaleX(1.1554);transform-origin:0 0;">11000</span><span style="position:absolute;left:1603.43px;top:507.58px;font-family:'Liberation Serif';font-size:11.6px;line-height:11.6px;font-weight:400;color:#545454;white-space:pre;transform:scaleX(1.1385);transform-origin:0 0;">12000</span><span style="position:absolute;left:1640.04px;top:507.58px;font-family:'Liberation Serif';font-size:11.6px;line-height:11.6px;font-weight:400;color:#545454;white-space:pre;transform:scaleX(1.1385);transform-origin:0 0;">13000</span><span style="position:absolute;left:1676.65px;top:507.58px;font-family:'Liberation Serif';font-size:11.6px;line-height:11.6px;font-weight:400;color:#545454;white-space:pre;transform:scaleX(1.1385);transform-origin:0 0;">14000</span><span style="position:absolute;left:1713.26px;top:507.58px;font-family:'Liberation Serif';font-size:11.6px;line-height:11.6px;font-weight:400;color:#545454;white-space:pre;transform:scaleX(1.1385);transform-origin:0 0;">15000</span><span style="position:absolute;left:1749.87px;top:507.58px;font-family:'Liberation Serif';font-size:11.6px;line-height:11.6px;font-weight:400;color:#545454;white-space:pre;transform:scaleX(1.1385);transform-origin:0 0;">16000</span><svg style="position:absolute;left:149px;top:537px;overflow:visible" width="361" height="129"><line x1="17.5" y1="2" x2="17.5" y2="127" stroke="#ebebeb" stroke-width="1"/><line x1="54.5" y1="2" x2="54.5" y2="127" stroke="#ebebeb" stroke-width="1"/><line x1="91.5" y1="2" x2="91.5" y2="127" stroke="#ebebeb" stroke-width="1"/><line x1="127.5" y1="2" x2="127.5" y2="127" stroke="#ebebeb" stroke-width="1"/><line x1="164.5" y1="2" x2="164.5" y2="127" stroke="#ebebeb" stroke-width="1"/><line x1="201.5" y1="2" x2="201.5" y2="127" stroke="#ebebeb" stroke-width="1"/><line x1="237.5" y1="2" x2="237.5" y2="127" stroke="#ebebeb" stroke-width="1"/><line x1="274.5" y1="2" x2="274.5" y2="127" stroke="#ebebeb" stroke-width="1"/><line x1="310.5" y1="2" x2="310.5" y2="127" stroke="#ebebeb" stroke-width="1"/><line x1="347.5" y1="2" x2="347.5" y2="127" stroke="#ebebeb" stroke-width="1"/><line x1="2" y1="33.5" x2="359" y2="33.5" stroke="#ebebeb" stroke-width="1"/><line x1="2" y1="64.5" x2="359" y2="64.5" stroke="#ebebeb" stroke-width="1"/><line x1="2" y1="96.5" x2="359" y2="96.5" stroke="#ebebeb" stroke-width="1"/><rect x="1" y="1" width="359" height="127" fill="none" stroke="#888" stroke-width="2"/><polyline transform="translate(0,0.5)" points="1.50,127.00 141.00,127.00 141.40,125.20 142.00,125.20 142.40,127.00 164.50,127.00 166.70,99.80 167.00,85.60 167.80,68.70 168.00,55.00 168.80,70.50 169.00,85.60 170.00,110.40 171.30,127.00 181.60,127.00 182.00,125.20 182.60,125.20 183.00,127.00 192.10,127.00 192.50,125.20 193.10,125.20 193.50,127.00 229.30,127.00 229.70,125.20 230.30,125.20 230.70,127.00 286.30,127.00 286.70,125.20 287.30,125.20 287.70,127.00 359.50,127.00" fill="none" stroke="#0000ff" stroke-opacity="0.85" stroke-width="1.05" stroke-linejoin="round"/><rect x="267.5" y="9.5" width="14" height="11" fill="#fff" stroke="#ccc" stroke-width="1"/><rect x="269" y="11" width="11" height="8" fill="#0000ff"/><path d="M359.3 -8.2L369.3 1.8L359.3 11.8L349.3 1.8Z" fill="#ff0000"/></svg><span style="position:absolute;left:434.50px;top:545.95px;font-family:'Liberation Serif';font-size:12px;line-height:12px;font-weight:400;color:#888;white-space:pre;transform:scaleX(1.1189);transform-origin:0 0;">aida06 1.8.L</span><span style="position:absolute;left:127.20px;top:534.08px;font-family:'Liberation Serif';font-size:11.6px;line-height:11.6px;font-weight:400;color:#545454;white-space:pre;transform:scaleX(1.0925);transform-origin:0 0;">100</span><span style="position:absolute;left:133.40px;top:565.83px;font-family:'Liberation Serif';font-size:11.6px;line-height:11.6px;font-weight:400;color:#545454;white-space:pre;transform:scaleX(1.1040);transform-origin:0 0;">75</span><span style="position:absolute;left:133.40px;top:597.58px;font-family:'Liberation Serif';font-size:11.6px;line-height:11.6px;font-weight:400;color:#545454;white-space:pre;transform:scaleX(1.1040);transform-origin:0 0;">50</span><span style="position:absolute;left:133.40px;top:629.33px;font-family:'Liberation Serif';font-size:11.6px;line-height:11.6px;font-weight:400;color:#545454;white-space:pre;transform:scaleX(1.1040);transform-origin:0 0;">25</span><span style="position:absolute;left:140.20px;top:661.08px;font-family:'Liberation Serif';font-size:11.6px;line-height:11.6px;font-weight:400;color:#545454;white-space:pre;transform:scaleX(1.0350);transform-origin:0 0;">0</span><span style="position:absolute;left:153.72px;top:669.58px;font-family:'Liberation Serif';font-size:11.6px;line-height:11.6px;font-weight:400;color:#545454;white-space:pre;transform:scaleX(1.1342);transform-origin:0 0;">7000</span><span style="position:absolute;left:190.33px;top:669.58px;font-family:'Liberation Serif';font-size:11.6px;line-height:11.6px;font-weight:400;color:#545454;white-space:pre;transform:scaleX(1.1342);transform-origin:0 0;">8000</span><span style="position:absolute;left:226.94px;top:669.58px;font-family:'Liberation Serif';font-size:11.6px;line-height:11.6px;font-weight:400;color:#545454;white-space:pre;transform:scaleX(1.1342);transform-origin:0 0;">9000</span><span style="position:absolute;left:260.20px;top:669.58px;font-family:'Liberation Serif';font-size:11.6px;line-height:11.6px;font-weight:400;color:#545454;white-space:pre;transform:scaleX(1.1385);transform-origin:0 0;">10000</span><span style="position:absolute;left:296.81px;top:669.58px;font-family:'Liberation Serif';font-size:11.6px;line-height:11.6px;font-weight:400;color:#545454;white-space:pre;transform:scaleX(1.1554);transform-origin:0 0;">11000</span><span style="position:absolute;left:333.43px;top:669.58px;font-family:'Liberation Serif';font-size:11.6px;line-height:11.6px;font-weight:400;color:#545454;white-space:pre;transform:scaleX(1.1385);transform-origin:0 0;">12000</span><span style="position:absolute;left:370.04px;top:669.58px;font-family:'Liberation Serif';font-size:11.6px;line-height:11.6px;font-weight:400;color:#545454;white-space:pre;transform:scaleX(1.1385);transform-origin:0 0;">13000</span><span style="position:absolute;left:406.65px;top:669.58px;font-family:'Liberation Serif';font-size:11.6px;line-height:11.6px;font-weight:400;color:#545454;white-space:pre;transform:scaleX(1.1385);transform-origin:0 0;">14000</span><span style="position:absolute;left:443.26px;top:669.58px;font-family:'Liberation Serif';font-size:11.6px;line-height:11.6px;font-weight:400;color:#545454;white-space:pre;transform:scaleX(1.1385);transform-origin:0 0;">15000</span><span style="position:absolute;left:479.87px;top:669.58px;font-family:'Liberation Serif';font-size:11.6px;line-height:11.6px;font-weight:400;color:#545454;white-space:pre;transform:scaleX(1.1385);transform-origin:0 0;">16000</span><svg style="position:absolute;left:784px;top:537px;overflow:visible" width="361" height="129"><line x1="17.5" y1="2" x2="17.5" y2="127" stroke="#d9d9d9" stroke-width="1"/><line x1="54.5" y1="2" x2="54.5" y2="127" stroke="#d9d9d9" stroke-width="1"/><line x1="91.5" y1="2" x2="91.5" y2="127" stroke="#d9d9d9" stroke-width="1"/><line x1="127.5" y1="2" x2="127.5" y2="127" stroke="#d9d9d9" stroke-width="1"/><line x1="164.5" y1="2" x2="164.5" y2="127" stroke="#d9d9d9" stroke-width="1"/><line x1="201.5" y1="2" x2="201.5" y2="127" stroke="#d9d9d9" stroke-width="1"/><line x1="237.5" y1="2" x2="237.5" y2="127" stroke="#d9d9d9" stroke-width="1"/><line x1="274.5" y1="2" x2="274.5" y2="127" stroke="#d9d9d9" stroke-width="1"/><line x1="310.5" y1="2" x2="310.5" y2="127" stroke="#d9d9d9" stroke-width="1"/><line x1="347.5" y1="2" x2="347.5" y2="127" stroke="#d9d9d9" stroke-width="1"/><line x1="2" y1="33.5" x2="359" y2="33.5" stroke="#d9d9d9" stroke-width="1"/><line x1="2" y1="64.5" x2="359" y2="64.5" stroke="#d9d9d9" stroke-width="1"/><line x1="2" y1="96.5" x2="359" y2="96.5" stroke="#d9d9d9" stroke-width="1"/><rect x="1" y="1" width="359" height="127" fill="none" stroke="#222" stroke-width="2"/><polyline transform="translate(0,0.5)" points="1.50,127.00 193.80,127.00 194.20,125.20 194.80,125.20 195.20,127.00 197.30,127.00 197.70,125.20 198.30,125.20 198.70,127.00 227.40,127.00 229.00,121.80 230.80,92.00 231.50,64.60 231.50,47.30 232.20,47.80 232.80,84.30 234.00,114.90 235.50,127.00 347.30,127.00 347.70,125.20 348.30,125.20 348.70,127.00 359.50,127.00" fill="none" stroke="#0000ff" stroke-opacity="0.85" stroke-width="1.05" stroke-linejoin="round"/><rect x="267.5" y="9.5" width="14" height="11" fill="#fff" stroke="#ccc" stroke-width="1"/><rect x="269" y="11" width="11" height="8" fill="#0000ff"/><path d="M359.3 -8.2L369.3 1.8L359.3 11.8L349.3 1.8Z" fill="#00ee00"/></svg><span style="position:absolute;left:1069.50px;top:545.95px;font-family:'Liberation Serif';font-size:12px;line-height:12px;font-weight:400;color:#222;white-space:pre;transform:scaleX(1.1273);transform-origin:0 0;">aida11 1.8.L</span><span style="position:absolute;left:762.20px;top:534.08px;font-family:'Liberation Serif';font-size:11.6px;line-height:11.6px;font-weight:400;color:#545454;white-space:pre;transform:scaleX(1.0925);transform-origin:0 0;">100</span><span style="position:absolute;left:768.40px;top:565.83px;font-family:'Liberation Serif';font-size:11.6px;line-height:11.6px;font-weight:400;color:#545454;white-space:pre;transform:scaleX(1.1040);transform-origin:0 0;">75</span><span style="position:absolute;left:768.40px;top:597.58px;font-family:'Liberation Serif';font-size:11.6px;line-height:11.6px;font-weight:400;color:#545454;white-space:pre;transform:scaleX(1.1040);transform-origin:0 0;">50</span><span style="position:absolute;left:768.40px;top:629.33px;font-family:'Liberation Serif';font-size:11.6px;line-height:11.6px;font-weight:400;color:#545454;white-space:pre;transform:scaleX(1.1040);transform-origin:0 0;">25</span><span style="position:absolute;left:775.20px;top:661.08px;font-family:'Liberation Serif';font-size:11.6px;line-height:11.6px;font-weight:400;color:#545454;white-space:pre;transform:scaleX(1.0350);transform-origin:0 0;">0</span><span style="position:absolute;left:788.72px;top:669.58px;font-family:'Liberation Serif';font-size:11.6px;line-height:11.6px;font-weight:400;color:#545454;white-space:pre;transform:scaleX(1.1342);transform-origin:0 0;">7000</span><span style="position:absolute;left:825.33px;top:669.58px;font-family:'Liberation Serif';font-size:11.6px;line-height:11.6px;font-weight:400;color:#545454;white-space:pre;transform:scaleX(1.1342);transform-origin:0 0;">8000</span><span style="position:absolute;left:861.94px;top:669.58px;font-family:'Liberation Serif';font-size:11.6px;line-height:11.6px;font-weight:400;color:#545454;white-space:pre;transform:scaleX(1.1342);transform-origin:0 0;">9000</span><span style="position:absolute;left:895.20px;top:669.58px;font-family:'Liberation Serif';font-size:11.6px;line-height:11.6px;font-weight:400;color:#545454;white-space:pre;transform:scaleX(1.1385);transform-origin:0 0;">10000</span><span style="position:absolute;left:931.81px;top:669.58px;font-family:'Liberation Serif';font-size:11.6px;line-height:11.6px;font-weight:400;color:#545454;white-space:pre;transform:scaleX(1.1554);transform-origin:0 0;">11000</span><span style="position:absolute;left:968.43px;top:669.58px;font-family:'Liberation Serif';font-size:11.6px;line-height:11.6px;font-weight:400;color:#545454;white-space:pre;transform:scaleX(1.1385);transform-origin:0 0;">12000</span><span style="position:absolute;left:1005.04px;top:669.58px;font-family:'Liberation Serif';font-size:11.6px;line-height:11.6px;font-weight:400;color:#545454;white-space:pre;transform:scaleX(1.1385);transform-origin:0 0;">13000</span><span style="position:absolute;left:1041.65px;top:669.58px;font-family:'Liberation Serif';font-size:11.6px;line-height:11.6px;font-weight:400;color:#545454;white-space:pre;transform:scaleX(1.1385);transform-origin:0 0;">14000</span><span style="position:absolute;left:1078.26px;top:669.58px;font-family:'Liberation Serif';font-size:11.6px;line-height:11.6px;font-weight:400;color:#545454;white-space:pre;transform:scaleX(1.1385);transform-origin:0 0;">15000</span><span style="position:absolute;left:1114.87px;top:669.58px;font-family:'Liberation Serif';font-size:11.6px;line-height:11.6px;font-weight:400;color:#545454;white-space:pre;transform:scaleX(1.1385);transform-origin:0 0;">16000</span><svg style="position:absolute;left:1419px;top:537px;overflow:visible" width="361" height="129"><line x1="17.5" y1="2" x2="17.5" y2="127" stroke="#ebebeb" stroke-width="1"/><line x1="54.5" y1="2" x2="54.5" y2="127" stroke="#ebebeb" stroke-width="1"/><line x1="91.5" y1="2" x2="91.5" y2="127" stroke="#ebebeb" stroke-width="1"/><line x1="127.5" y1="2" x2="127.5" y2="127" stroke="#ebebeb" stroke-width="1"/><line x1="164.5" y1="2" x2="164.5" y2="127" stroke="#ebebeb" stroke-width="1"/><line x1="201.5" y1="2" x2="201.5" y2="127" stroke="#ebebeb" stroke-width="1"/><line x1="237.5" y1="2" x2="237.5" y2="127" stroke="#ebebeb" stroke-width="1"/><line x1="274.5" y1="2" x2="274.5" y2="127" stroke="#ebebeb" stroke-width="1"/><line x1="310.5" y1="2" x2="310.5" y2="127" stroke="#ebebeb" stroke-width="1"/><line x1="347.5" y1="2" x2="347.5" y2="127" stroke="#ebebeb" stroke-width="1"/><line x1="2" y1="33.5" x2="359" y2="33.5" stroke="#ebebeb" stroke-width="1"/><line x1="2" y1="64.5" x2="359" y2="64.5" stroke="#ebebeb" stroke-width="1"/><line x1="2" y1="96.5" x2="359" y2="96.5" stroke="#ebebeb" stroke-width="1"/><rect x="1" y="1" width="359" height="127" fill="none" stroke="#888" stroke-width="2"/><polyline transform="translate(0,0.5)" points="1.50,127.00 209.80,127.00 210.20,125.20 210.80,125.20 211.20,127.00 236.30,127.00 238.00,110.40 239.00,85.60 240.00,69.60 240.40,61.20 241.00,69.60 241.80,94.50 242.80,118.40 244.00,127.00 289.30,127.00 289.70,125.20 290.30,125.20 290.70,127.00 353.30,127.00 353.70,125.20 354.30,125.20 354.70,127.00 359.50,127.00" fill="none" stroke="#0000ff" stroke-opacity="0.85" stroke-width="1.05" stroke-linejoin="round"/><rect x="267.5" y="9.5" width="14" height="11" fill="#fff" stroke="#ccc" stroke-width="1"/><rect x="269" y="11" width="11" height="8" fill="#0000ff"/><path d="M359.3 -8.2L369.3 1.8L359.3 11.8L349.3 1.8Z" fill="#ff0000"/></svg><span style="position:absolute;left:1704.50px;top:545.95px;font-family:'Liberation Serif';font-size:12px;line-height:12px;font-weight:400;color:#888;white-space:pre;transform:scaleX(1.1189);transform-origin:0 0;">aida12 1.8.L</span><span style="position:absolute;left:1397.20px;top:534.08px;font-family:'Liberation Serif';font-size:11.6px;line-height:11.6px;font-weight:400;color:#545454;white-space:pre;transform:scaleX(1.0925);transform-origin:0 0;">100</span><span style="position:absolute;left:1403.40px;top:565.83px;font-family:'Liberation Serif';font-size:11.6px;line-height:11.6px;font-weight:400;color:#545454;white-space:pre;transform:scaleX(1.1040);transform-origin:0 0;">75</span><span style="position:absolute;left:1403.40px;top:597.58px;font-family:'Liberation Serif';font-size:11.6px;line-height:11.6px;font-weight:400;color:#545454;white-space:pre;transform:scaleX(1.1040);transform-origin:0 0;">50</span><span style="position:absolute;left:1403.40px;top:629.33px;font-family:'Liberation Serif';font-size:11.6px;line-height:11.6px;font-weight:400;color:#545454;white-space:pre;transform:scaleX(1.1040);transform-origin:0 0;">25</span><span style="position:absolute;left:1410.20px;top:661.08px;font-family:'Liberation Serif';font-size:11.6px;line-height:11.6px;font-weight:400;color:#545454;white-space:pre;transform:scaleX(1.0350);transform-origin:0 0;">0</span><span style="position:absolute;left:1423.72px;top:669.58px;font-family:'Liberation Serif';font-size:11.6px;line-height:11.6px;font-weight:400;color:#545454;white-space:pre;transform:scaleX(1.1342);transform-origin:0 0;">7000</span><span style="position:absolute;left:1460.33px;top:669.58px;font-family:'Liberation Serif';font-size:11.6px;line-height:11.6px;font-weight:400;color:#545454;white-space:pre;transform:scaleX(1.1342);transform-origin:0 0;">8000</span><span style="position:absolute;left:1496.94px;top:669.58px;font-family:'Liberation Serif';font-size:11.6px;line-height:11.6px;font-weight:400;color:#545454;white-space:pre;transform:scaleX(1.1342);transform-origin:0 0;">9000</span><span style="position:absolute;left:1530.20px;top:669.58px;font-family:'Liberation Serif';font-size:11.6px;line-height:11.6px;font-weight:400;color:#545454;white-space:pre;transform:scaleX(1.1385);transform-origin:0 0;">10000</span><span style="position:absolute;left:1566.81px;top:669.58px;font-family:'Liberation Serif';font-size:11.6px;line-height:11.6px;font-weight:400;color:#545454;white-space:pre;transform:scaleX(1.1554);transform-origin:0 0;">11000</span><span style="position:absolute;left:1603.43px;top:669.58px;font-family:'Liberation Serif';font-size:11.6px;line-height:11.6px;font-weight:400;color:#545454;white-space:pre;transform:scaleX(1.1385);transform-origin:0 0;">12000</span><span style="position:absolute;left:1640.04px;top:669.58px;font-family:'Liberation Serif';font-size:11.6px;line-height:11.6px;font-weight:400;color:#545454;white-space:pre;transform:scaleX(1.1385);transform-origin:0 0;">13000</span><span style="position:absolute;left:1676.65px;top:669.58px;font-family:'Liberation Serif';font-size:11.6px;line-height:11.6px;font-weight:400;color:#545454;white-space:pre;transform:scaleX(1.1385);transform-origin:0 0;">14000</span><span style="position:absolute;left:1713.26px;top:669.58px;font-family:'Liberation Serif';font-size:11.6px;line-height:11.6px;font-weight:400;color:#545454;white-space:pre;transform:scaleX(1.1385);transform-origin:0 0;">15000</span><span style="position:absolute;left:1749.87px;top:669.58px;font-family:'Liberation Serif';font-size:11.6px;line-height:11.6px;font-weight:400;color:#545454;white-space:pre;transform:scaleX(1.1385);transform-origin:0 0;">16000</span><svg style="position:absolute;left:149px;top:699px;overflow:visible" width="361" height="129"><line x1="17.5" y1="2" x2="17.5" y2="127" stroke="#ebebeb" stroke-width="1"/><line x1="54.5" y1="2" x2="54.5" y2="127" stroke="#ebebeb" stroke-width="1"/><line x1="91.5" y1="2" x2="91.5" y2="127" stroke="#ebebeb" stroke-width="1"/><line x1="127.5" y1="2" x2="127.5" y2="127" stroke="#ebebeb" stroke-width="1"/><line x1="164.5" y1="2" x2="164.5" y2="127" stroke="#ebebeb" stroke-width="1"/><line x1="201.5" y1="2" x2="201.5" y2="127" stroke="#ebebeb" stroke-width="1"/><line x1="237.5" y1="2" x2="237.5" y2="127" stroke="#ebebeb" stroke-width="1"/><line x1="274.5" y1="2" x2="274.5" y2="127" stroke="#ebebeb" stroke-width="1"/><line x1="310.5" y1="2" x2="310.5" y2="127" stroke="#ebebeb" stroke-width="1"/><line x1="347.5" y1="2" x2="347.5" y2="127" stroke="#ebebeb" stroke-width="1"/><line x1="2" y1="33.5" x2="359" y2="33.5" stroke="#ebebeb" stroke-width="1"/><line x1="2" y1="64.5" x2="359" y2="64.5" stroke="#ebebeb" stroke-width="1"/><line x1="2" y1="96.5" x2="359" y2="96.5" stroke="#ebebeb" stroke-width="1"/><rect x="1" y="1" width="359" height="127" fill="none" stroke="#888" stroke-width="2"/><polyline transform="translate(0,0.5)" points="1.50,127.00 161.00,127.00 161.40,125.20 162.00,125.20 162.40,127.00 182.70,127.00 184.50,114.90 185.30,97.10 186.30,89.20 187.30,82.50 187.80,95.40 188.50,95.40 189.20,104.20 190.50,122.00 192.00,127.00 209.00,127.00 209.40,125.20 210.00,125.20 210.40,127.00 253.00,127.00 253.40,125.20 254.00,125.20 254.40,127.00 277.60,127.00 278.00,125.20 278.60,125.20 279.00,127.00 359.50,127.00" fill="none" stroke="#0000ff" stroke-opacity="0.85" stroke-width="1.05" stroke-linejoin="round"/><rect x="267.5" y="9.5" width="14" height="11" fill="#fff" stroke="#ccc" stroke-width="1"/><rect x="269" y="11" width="11" height="8" fill="#0000ff"/><path d="M359.3 -8.2L369.3 1.8L359.3 11.8L349.3 1.8Z" fill="#ff0000"/></svg><span style="position:absolute;left:434.50px;top:707.95px;font-family:'Liberation Serif';font-size:12px;line-height:12px;font-weight:400;color:#888;white-space:pre;transform:scaleX(1.1189);transform-origin:0 0;">aida15 1.8.L</span><span style="position:absolute;left:127.20px;top:696.08px;font-family:'Liberation Serif';font-size:11.6px;line-height:11.6px;font-weight:400;color:#545454;white-space:pre;transform:scaleX(1.0925);transform-origin:0 0;">100</span><span style="position:absolute;left:133.40px;top:727.83px;font-family:'Liberation Serif';font-size:11.6px;line-height:11.6px;font-weight:400;color:#545454;white-space:pre;transform:scaleX(1.1040);transform-origin:0 0;">75</span><span style="position:absolute;left:133.40px;top:759.58px;font-family:'Liberation Serif';font-size:11.6px;line-height:11.6px;font-weight:400;color:#545454;white-space:pre;transform:scaleX(1.1040);transform-origin:0 0;">50</span><span style="position:absolute;left:133.40px;top:791.33px;font-family:'Liberation Serif';font-size:11.6px;line-height:11.6px;font-weight:400;color:#545454;white-space:pre;transform:scaleX(1.1040);transform-origin:0 0;">25</span><span style="position:absolute;left:140.20px;top:823.08px;font-family:'Liberation Serif';font-size:11.6px;line-height:11.6px;font-weight:400;color:#545454;white-space:pre;transform:scaleX(1.0350);transform-origin:0 0;">0</span><span style="position:absolute;left:153.72px;top:831.58px;font-family:'Liberation Serif';font-size:11.6px;line-height:11.6px;font-weight:400;color:#545454;white-space:pre;transform:scaleX(1.1342);transform-origin:0 0;">7000</span><span style="position:absolute;left:190.33px;top:831.58px;font-family:'Liberation Serif';font-size:11.6px;line-height:11.6px;font-weight:400;color:#545454;white-space:pre;transform:scaleX(1.1342);transform-origin:0 0;">8000</span><span style="position:absolute;left:226.94px;top:831.58px;font-family:'Liberation Serif';font-size:11.6px;line-height:11.6px;font-weight:400;color:#545454;white-space:pre;transform:scaleX(1.1342);transform-origin:0 0;">9000</span><span style="position:absolute;left:260.20px;top:831.58px;font-family:'Liberation Serif';font-size:11.6px;line-height:11.6px;font-weight:400;color:#545454;white-space:pre;transform:scaleX(1.1385);transform-origin:0 0;">10000</span><span style="position:absolute;left:296.81px;top:831.58px;font-family:'Liberation Serif';font-size:11.6px;line-height:11.6px;font-weight:400;color:#545454;white-space:pre;transform:scaleX(1.1554);transform-origin:0 0;">11000</span><span style="position:absolute;left:333.43px;top:831.58px;font-family:'Liberation Serif';font-size:11.6px;line-height:11.6px;font-weight:400;color:#545454;white-space:pre;transform:scaleX(1.1385);transform-origin:0 0;">12000</span><span style="position:absolute;left:370.04px;top:831.58px;font-family:'Liberation Serif';font-size:11.6px;line-height:11.6px;font-weight:400;color:#545454;white-space:pre;transform:scaleX(1.1385);transform-origin:0 0;">13000</span><span style="position:absolute;left:406.65px;top:831.58px;font-family:'Liberation Serif';font-size:11.6px;line-height:11.6px;font-weight:400;color:#545454;white-space:pre;transform:scaleX(1.1385);transform-origin:0 0;">14000</span><span style="position:absolute;left:443.26px;top:831.58px;font-family:'Liberation Serif';font-size:11.6px;line-height:11.6px;font-weight:400;color:#545454;white-space:pre;transform:scaleX(1.1385);transform-origin:0 0;">15000</span><span style="position:absolute;left:479.87px;top:831.58px;font-family:'Liberation Serif';font-size:11.6px;line-height:11.6px;font-weight:400;color:#545454;white-space:pre;transform:scaleX(1.1385);transform-origin:0 0;">16000</span><svg style="position:absolute;left:784px;top:699px;overflow:visible" width="361" height="129"><line x1="17.5" y1="2" x2="17.5" y2="127" stroke="#ebebeb" stroke-width="1"/><line x1="54.5" y1="2" x2="54.5" y2="127" stroke="#ebebeb" stroke-width="1"/><line x1="91.5" y1="2" x2="91.5" y2="127" stroke="#ebebeb" stroke-width="1"/><line x1="127.5" y1="2" x2="127.5" y2="127" stroke="#ebebeb" stroke-width="1"/><line x1="164.5" y1="2" x2="164.5" y2="127" stroke="#ebebeb" stroke-width="1"/><line x1="201.5" y1="2" x2="201.5" y2="127" stroke="#ebebeb" stroke-width="1"/><line x1="237.5" y1="2" x2="237.5" y2="127" stroke="#ebebeb" stroke-width="1"/><line x1="274.5" y1="2" x2="274.5" y2="127" stroke="#ebebeb" stroke-width="1"/><line x1="310.5" y1="2" x2="310.5" y2="127" stroke="#ebebeb" stroke-width="1"/><line x1="347.5" y1="2" x2="347.5" y2="127" stroke="#ebebeb" stroke-width="1"/><line x1="2" y1="33.5" x2="359" y2="33.5" stroke="#ebebeb" stroke-width="1"/><line x1="2" y1="64.5" x2="359" y2="64.5" stroke="#ebebeb" stroke-width="1"/><line x1="2" y1="96.5" x2="359" y2="96.5" stroke="#ebebeb" stroke-width="1"/><rect x="1" y="1" width="359" height="127" fill="none" stroke="#888" stroke-width="2"/><polyline transform="translate(0,0.5)" points="1.50,127.00 108.60,127.00 109.00,125.20 109.60,125.20 110.00,127.00 127.30,127.00 127.70,125.20 128.30,125.20 128.70,127.00 143.30,127.00 145.00,119.30 145.80,111.30 146.80,104.20 147.50,92.70 148.50,98.90 149.30,96.30 151.50,111.30 153.00,125.50 154.50,127.00 159.30,127.00 159.70,125.20 160.30,125.20 160.70,127.00 196.00,127.00 196.40,125.20 197.00,125.20 197.40,127.00 246.00,127.00 246.40,125.20 247.00,125.20 247.40,127.00 270.00,127.00 270.40,125.20 271.00,125.20 271.40,127.00 359.50,127.00" fill="none" stroke="#0000ff" stroke-opacity="0.85" stroke-width="1.05" stroke-linejoin="round"/><rect x="267.5" y="9.5" width="14" height="11" fill="#fff" stroke="#ccc" stroke-width="1"/><rect x="269" y="11" width="11" height="8" fill="#0000ff"/><path d="M359.3 -8.2L369.3 1.8L359.3 11.8L349.3 1.8Z" fill="#ff0000"/></svg><span style="position:absolute;left:1069.50px;top:707.95px;font-family:'Liberation Serif';font-size:12px;line-height:12px;font-weight:400;color:#888;white-space:pre;transform:scaleX(1.1189);transform-origin:0 0;">aida16 1.8.L</span><span style="position:absolute;left:762.20px;top:696.08px;font-family:'Liberation Serif';font-size:11.6px;line-height:11.6px;font-weight:400;color:#545454;white-space:pre;transform:scaleX(1.0925);transform-origin:0 0;">100</span><span style="position:absolute;left:768.40px;top:727.83px;font-family:'Liberation Serif';font-size:11.6px;line-height:11.6px;font-weight:400;color:#545454;white-space:pre;transform:scaleX(1.1040);transform-origin:0 0;">75</span><span style="position:absolute;left:768.40px;top:759.58px;font-family:'Liberation Serif';font-size:11.6px;line-height:11.6px;font-weight:400;color:#545454;white-space:pre;transform:scaleX(1.1040);transform-origin:0 0;">50</span><span style="position:absolute;left:768.40px;top:791.33px;font-family:'Liberation Serif';font-size:11.6px;line-height:11.6px;font-weight:400;color:#545454;white-space:pre;transform:scaleX(1.1040);transform-origin:0 0;">25</span><span style="position:absolute;left:775.20px;top:823.08px;font-family:'Liberation Serif';font-size:11.6px;line-height:11.6px;font-weight:400;color:#545454;white-space:pre;transform:scaleX(1.0350);transform-origin:0 0;">0</span><span style="position:absolute;left:788.72px;top:831.58px;font-family:'Liberation Serif';font-size:11.6px;line-height:11.6px;font-weight:400;color:#545454;white-space:pre;transform:scaleX(1.1342);transform-origin:0 0;">7000</span><span style="position:absolute;left:825.33px;top:831.58px;font-family:'Liberation Serif';font-size:11.6px;line-height:11.6px;font-weight:400;color:#545454;white-space:pre;transform:scaleX(1.1342);transform-origin:0 0;">8000</span><span style="position:absolute;left:861.94px;top:831.58px;font-family:'Liberation Serif';font-size:11.6px;line-height:11.6px;font-weight:400;color:#545454;white-space:pre;transform:scaleX(1.1342);transform-origin:0 0;">9000</span><span style="position:absolute;left:895.20px;top:831.58px;font-family:'Liberation Serif';font-size:11.6px;line-height:11.6px;font-weight:400;color:#545454;white-space:pre;transform:scaleX(1.1385);transform-origin:0 0;">10000</span><span style="position:absolute;left:931.81px;top:831.58px;font-family:'Liberation Serif';font-size:11.6px;line-height:11.6px;font-weight:400;color:#545454;white-space:pre;transform:scaleX(1.1554);transform-origin:0 0;">11000</span><span style="position:absolute;left:968.43px;top:831.58px;font-family:'Liberation Serif';font-size:11.6px;line-height:11.6px;font-weight:400;color:#545454;white-space:pre;transform:scaleX(1.1385);transform-origin:0 0;">12000</span><span style="position:absolute;left:1005.04px;top:831.58px;font-family:'Liberation Serif';font-size:11.6px;line-height:11.6px;font-weight:400;color:#545454;white-space:pre;transform:scaleX(1.1385);transform-origin:0 0;">13000</span><span style="position:absolute;left:1041.65px;top:831.58px;font-family:'Liberation Serif';font-size:11.6px;line-height:11.6px;font-weight:400;color:#545454;white-space:pre;transform:scaleX(1.1385);transform-origin:0 0;">14000</span><span style="position:absolute;left:1078.26px;top:831.58px;font-family:'Liberation Serif';font-size:11.6px;line-height:11.6px;font-weight:400;color:#545454;white-space:pre;transform:scaleX(1.1385);transform-origin:0 0;">15000</span><span style="position:absolute;left:1114.87px;top:831.58px;font-family:'Liberation Serif';font-size:11.6px;line-height:11.6px;font-weight:400;color:#545454;white-space:pre;transform:scaleX(1.1385);transform-origin:0 0;">16000</span>
</body></html>
